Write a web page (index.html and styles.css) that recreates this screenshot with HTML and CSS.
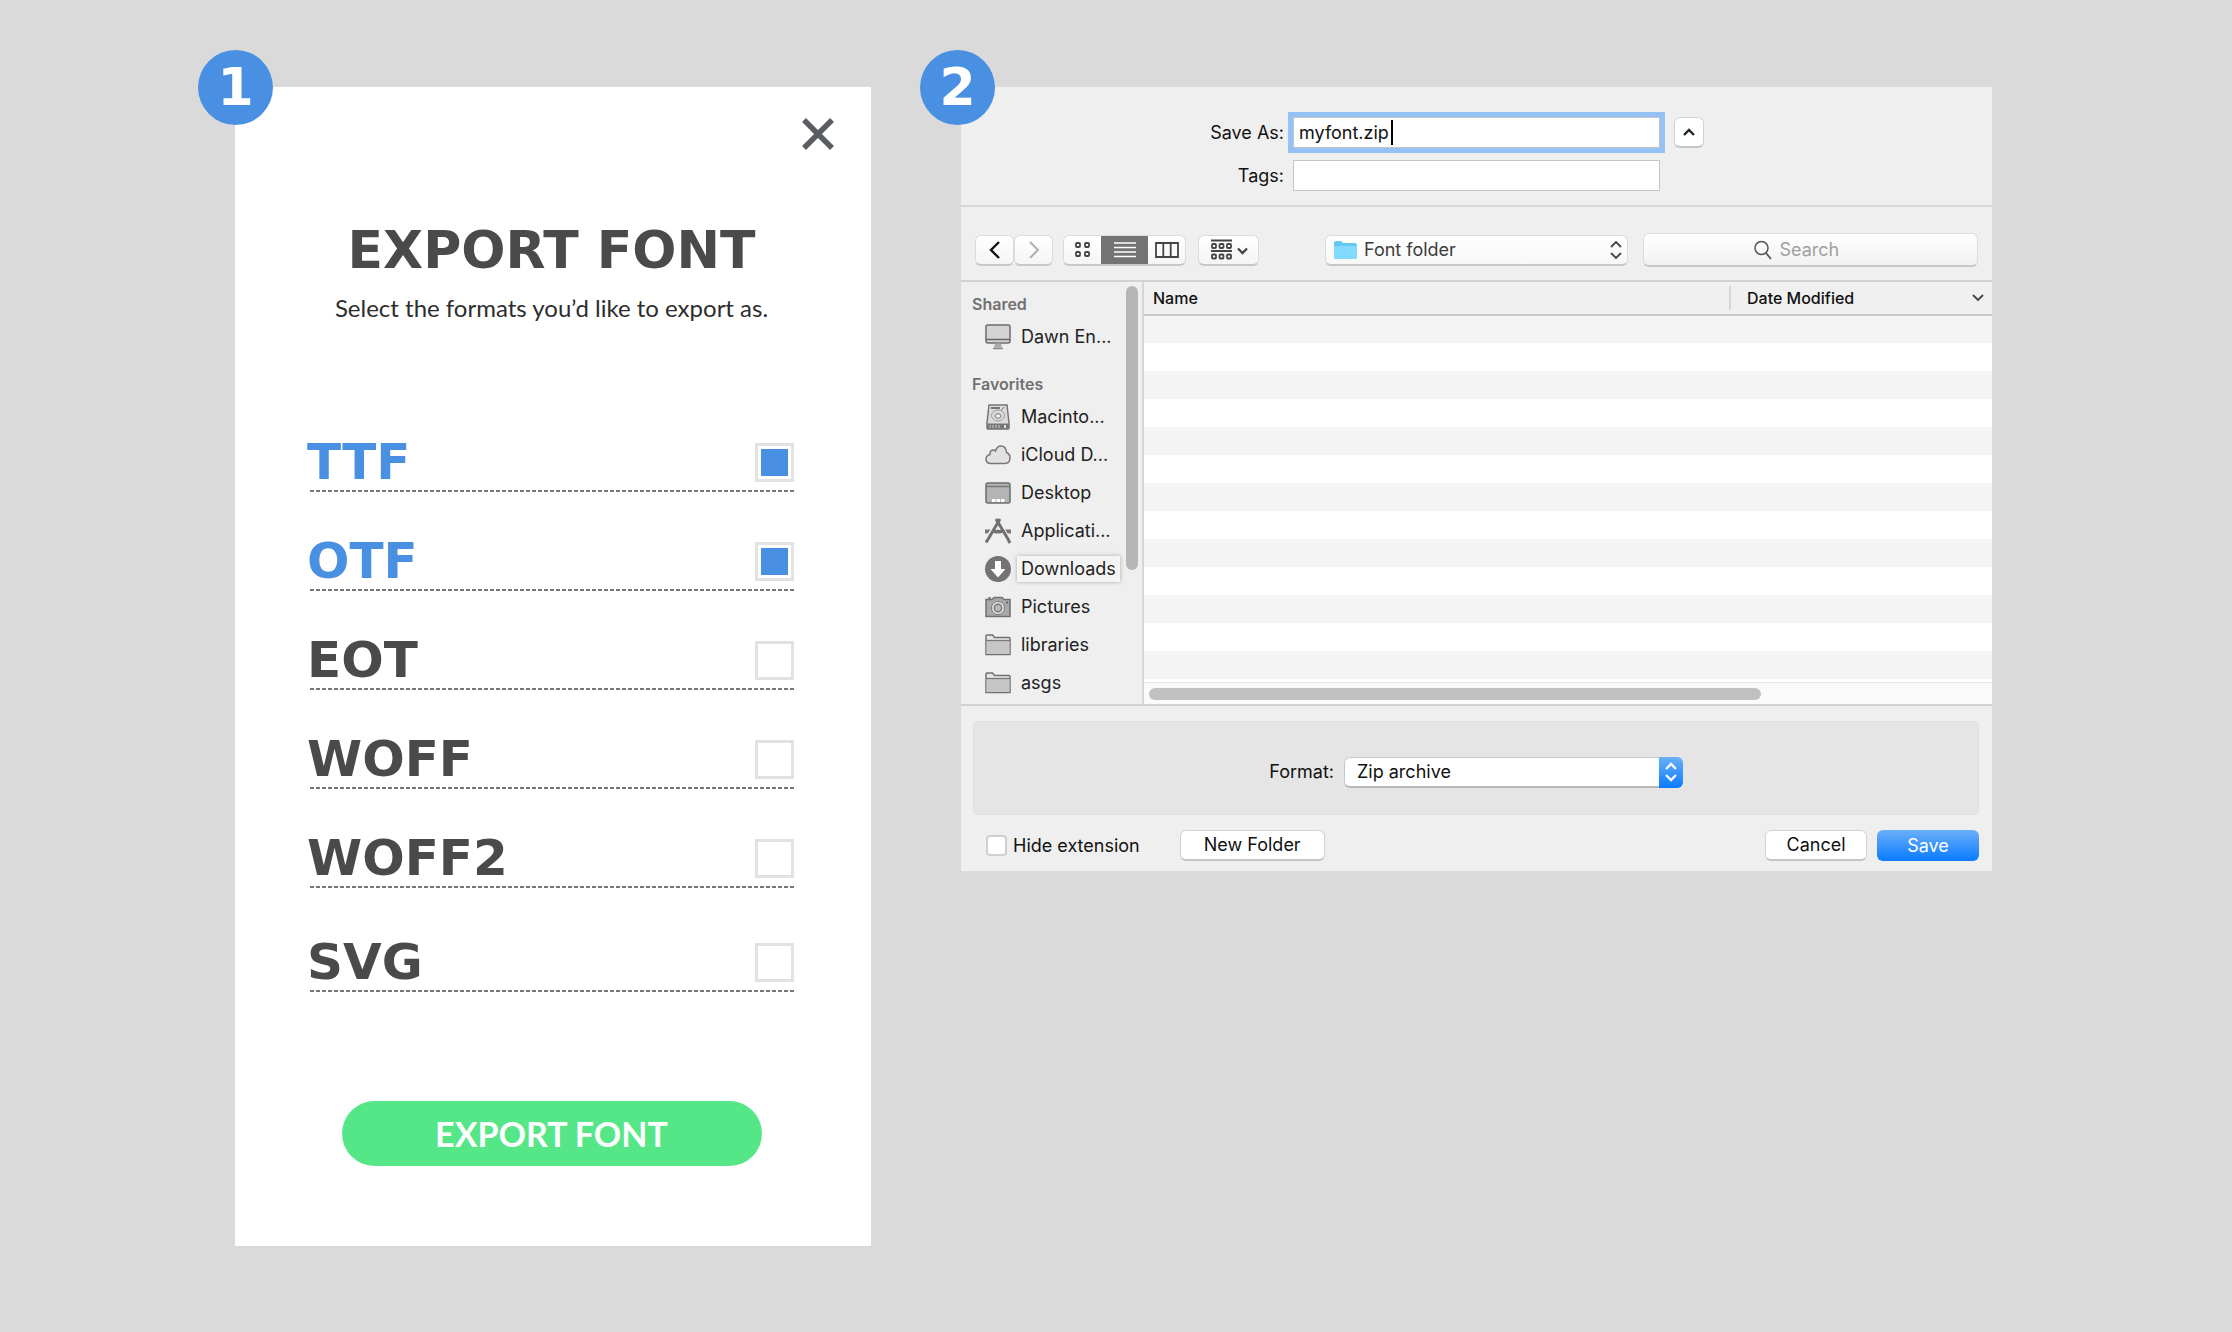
FILE: index.html
```html
<!DOCTYPE html>
<html lang="en">
<head>
<meta charset="utf-8">
<title>Export font</title>
<link rel="stylesheet" href="styles.css">
</head>
<body>
<main class="steps">
  <section class="export">
    <span class="badge">1</span>
    <button class="close" type="button" aria-label="Close">
      <svg width="32" height="32" viewBox="0 0 32 32"><path d="M2 2 30 30M30 2 2 30" stroke="#5a5d62" stroke-width="5.500"/></svg>
    </button>
    <h1 class="export-title">EXPORT FONT</h1>
    <p class="export-hint">Select the formats you’d like to export as.</p>
    <form class="formats">
      <label class="format"><span>TTF</span><input type="checkbox" checked></label>
      <label class="format"><span>OTF</span><input type="checkbox" checked></label>
      <label class="format"><span>EOT</span><input type="checkbox"></label>
      <label class="format"><span>WOFF</span><input type="checkbox"></label>
      <label class="format"><span>WOFF2</span><input type="checkbox"></label>
      <label class="format format-last"><span>SVG</span><input type="checkbox"></label>
      <button class="export-button" type="button">EXPORT FONT</button>
    </form>
  </section>

  <section class="dialog">
    <span class="badge">2</span>
    <div class="names">
      <label for="save-as">Save As:</label>
      <div class="field"><input class="text focused" id="save-as" type="text" value="myfont.zip"><span class="caret"></span></div>
      <button class="btn collapse" type="button" aria-label="Collapse">
        <svg width="14" height="10" viewBox="0 0 14 10"><path d="M2 8 7 3l5 5" class="line thick"/></svg>
      </button>
      <label for="tags">Tags:</label>
      <input class="text" id="tags" type="text">
    </div>

    <div class="toolbar">
      <div class="nav">
        <button class="btn" type="button" aria-label="Back"><svg width="12" height="20" viewBox="0 0 12 20"><path d="M10 2 2 10l8 8" fill="none" stroke="#111" stroke-width="2.4"/></svg></button>
        <button class="btn" type="button" aria-label="Forward"><svg width="12" height="20" viewBox="0 0 12 20"><path d="m2 2 8 8-8 8" fill="none" stroke="#b0b0b0" stroke-width="2"/></svg></button>
      </div>
      <div class="views">
        <button type="button" aria-label="Icons"><svg width="18" height="18" viewBox="0 0 18 18"><g class="line"><rect x="2" y="2" width="4" height="4" rx="1"/><rect x="11" y="2" width="4" height="4" rx="1"/><rect x="2" y="11" width="4" height="4" rx="1"/><rect x="11" y="11" width="4" height="4" rx="1"/></g></svg></button>
        <button class="active" type="button" aria-label="List"><svg width="22" height="18" viewBox="0 0 22 18"><path d="M0 2h22M0 6.500h22M0 11h22M0 15.500h22" stroke="#fff" stroke-width="1.600"/></svg></button>
        <button type="button" aria-label="Columns"><svg width="26" height="18" viewBox="0 0 26 18"><path d="M2 2h22v14H2zM9.300 2v14M16.700 2v14" class="line"/></svg></button>
      </div>
      <button class="btn arrange" type="button" aria-label="Arrange">
        <svg width="38" height="22" viewBox="0 0 38 22"><g class="line"><path d="M1 1.500h21M1 12h21"/><rect x="2" y="5" width="4" height="4" rx="1"/><rect x="9.500" y="5" width="4" height="4" rx="1"/><rect x="17" y="5" width="4" height="4" rx="1"/><rect x="2" y="15.500" width="4" height="4" rx="1"/><rect x="9.500" y="15.500" width="4" height="4" rx="1"/><rect x="17" y="15.500" width="4" height="4" rx="1"/><path d="m28 9.500 4.500 4.500L37 9.500" stroke-width="2.300"/></g></svg>
      </button>
      <div class="folder">
        <svg class="folder-icon" width="23" height="20" viewBox="0 0 23 20"><path d="M0 3Q0 1 2 1h5l2 2h12q2 0 2 2v12q0 2-2 2H2q-2 0-2-2z" fill="#64c8f0"/><path d="M0 6h23v11q0 2-2 2H2q-2 0-2-2z" fill="#82dbff"/></svg>
        <select aria-label="Folder"><option>Font folder</option></select>
        <svg class="folder-arrows" width="12" height="20" viewBox="0 0 12 20"><path d="m1 7 5-5 5 5M1 13l5 5 5-5" class="line"/></svg>
      </div>
      <label class="search">
        <svg width="18" height="20" viewBox="0 0 18 20"><circle cx="7.500" cy="8" r="6.500" fill="none" stroke="#555" stroke-width="1.500"/><path d="m12 13 5 6" stroke="#555" stroke-width="1.800"/></svg>
        <input type="search" placeholder="Search" aria-label="Search">
      </label>
    </div>

    <div class="browser">
      <nav class="sidebar">
        <h2>Shared</h2>
        <ul>
          <li><a href="#"><svg width="26" height="26" viewBox="0 0 26 26"><rect x="1" y="1" width="24" height="18" rx="2" fill="#d4d4d4" stroke="#6c6c6c" stroke-width="1.500"/><path d="M1 15.500h24" stroke="#666" stroke-width="1.500"/><path d="M10 19.500h6l1 4H9z" fill="#aaa"/><path d="M8 24.500h10" stroke="#888" stroke-width="1.500"/></svg><span>Dawn En...</span></a></li>
        </ul>
        <h2>Favorites</h2>
        <ul>
          <li><a href="#"><svg width="26" height="26" viewBox="0 0 26 26"><path d="M4 1h18l2 18v5q0 1-1 1H3q-1 0-1-1v-5z" fill="#dcdcdc" stroke="#747474" stroke-width="1.500"/><path d="M2 19.500h22V25H2z" fill="#777"/><path d="M5 21v3m3-3v3m3-3v3m3-3v3" stroke="#ccc"/><path d="M20 21v3" stroke="#ddd" stroke-width="2"/><path d="M6 4h9" stroke="#555" stroke-width="1.500"/><path d="m19 3-3 4" stroke="#777"/><ellipse cx="13" cy="11.500" rx="6.500" ry="5.500" fill="none" stroke="#999"/><ellipse cx="13" cy="12" rx="3" ry="2.300" fill="#eee" stroke="#777"/></svg><span>Macinto...</span></a></li>
          <li><a href="#"><svg width="26" height="26" viewBox="0 0 26 26"><path d="M6 21.500C2.500 21.500 1 19.500 1 17q0-3.500 4-4.500-.5-4 3-4.500 1.500 0 2.500 1 1.500-5 5.500-5 5 0 5.500 6.500 3.500 1.500 3.500 5 0 6-5.500 6z" fill="#e2e2e2" stroke="#777" stroke-width="1.500"/></svg><span>iCloud D...</span></a></li>
          <li><a href="#"><svg width="26" height="26" viewBox="0 0 26 26"><rect x="1" y="3" width="24" height="20" rx="2" fill="#b4b4b4" stroke="#6c6c6c" stroke-width="1.500"/><path d="M1 6.500h24" stroke="#777" stroke-width="1.500"/><path d="M7 19h3.500v3H7zm4.500 0h3.500v3h-3.500zM16 19h3.500v3H16z" fill="#fff"/></svg><span>Desktop</span></a></li>
          <li><a href="#"><svg width="26" height="26" viewBox="0 0 26 26"><path d="M0 13.500h26" stroke="#777" stroke-width="4"/><path d="M14.500 2 3 21" stroke="#efefef" stroke-width="6"/><path d="m11 2 11.500 19" stroke="#efefef" stroke-width="6"/><path d="M15 1 3.500 20.500 1 24.500M11 1l12 20M23 21l2 4" stroke="#707070" stroke-width="3"/><path d="M7 13.500h11" stroke="#707070" stroke-width="3"/></svg><span>Applicati...</span></a></li>
          <li><a href="#" class="selected"><svg width="26" height="26" viewBox="0 0 26 26"><circle cx="13" cy="13" r="13" fill="#737373"/><path d="M10 5h6v8h4.500L13 21.500 5.500 13H10z" fill="#fff"/></svg><span>Downloads</span></a></li>
          <li><a href="#"><svg width="26" height="26" viewBox="0 0 26 26"><path d="M1 5.500h5l1 0 2-2h8l2 2h6v17H1z" fill="#a9a9a9" stroke="#707070" stroke-width="1.500"/><path d="M3 4h3" stroke="#707070" stroke-width="1.500"/><circle cx="13" cy="14" r="6.500" fill="#e8e8e8" stroke="#777"/><circle cx="13" cy="14" r="3.700" fill="#bbb" stroke="#777" stroke-width="1.500"/><circle cx="22" cy="8.500" r="1" fill="#555"/></svg><span>Pictures</span></a></li>
          <li><a href="#"><svg width="26" height="26" viewBox="0 0 26 26"><path d="M1 22.500V4q0-1 1-1h5.500l2 2.500H24q1 0 1 1v16z" fill="#e6e6e6" stroke="#707070" stroke-width="1.500"/><path d="M1.500 8.500h23V22h-23z" fill="#c6c6c6"/><path d="M1 8.500h24" stroke="#777" stroke-width="1.300"/></svg><span>libraries</span></a></li>
          <li><a href="#"><svg width="26" height="26" viewBox="0 0 26 26"><path d="M1 22.500V4q0-1 1-1h5.500l2 2.500H24q1 0 1 1v16z" fill="#e6e6e6" stroke="#707070" stroke-width="1.500"/><path d="M1.500 8.500h23V22h-23z" fill="#c6c6c6"/><path d="M1 8.500h24" stroke="#777" stroke-width="1.300"/></svg><span>asgs</span></a></li>
        </ul>
        <span class="scroll-y"></span>
      </nav>
      <div class="files">
        <table>
          <thead><tr><th class="name">Name</th><th class="date"><div>Date Modified<svg width="12" height="8" viewBox="0 0 12 8"><path d="m1 1 5 5 5-5" class="line"/></svg></div></th></tr></thead>
          <tbody>
            <tr><td></td><td></td></tr><tr><td></td><td></td></tr><tr><td></td><td></td></tr><tr><td></td><td></td></tr><tr><td></td><td></td></tr><tr><td></td><td></td></tr><tr><td></td><td></td></tr><tr><td></td><td></td></tr><tr><td></td><td></td></tr><tr><td></td><td></td></tr><tr><td></td><td></td></tr><tr><td></td><td></td></tr><tr><td></td><td></td></tr>
          </tbody>
        </table>
        <div class="scroll-x"><span></span></div>
      </div>
    </div>

    <div class="options">
      <label for="format">Format:</label>
      <div class="picker">
        <select id="format"><option>Zip archive</option></select>
        <span class="picker-arrows"><svg width="12" height="20" viewBox="0 0 12 20"><path d="m1 7 5-5 5 5M1 13l5 5 5-5" fill="none" stroke="#fff" stroke-width="2.300"/></svg></span>
      </div>
    </div>

    <div class="actions">
      <label class="hide-ext"><input type="checkbox">Hide extension</label>
      <button class="btn new-folder" type="button">New Folder</button>
      <button class="btn cancel" type="button">Cancel</button>
      <button class="btn save" type="button">Save</button>
    </div>
  </section>
</main>
</body>
</html>
```

FILE: styles.css
```css
* { box-sizing: border-box; }

body {
  margin: 0;
  background: #dadada;
  color: #111;
  font: 18px/24px Inter, "Liberation Sans", sans-serif;
}

button, input, select { font: inherit; color: inherit; margin: 0; padding: 0; border: 0; }
button { display: flex; align-items: center; justify-content: center; background: none; }
svg { display: block; flex: none; }
.line { fill: none; stroke: #444; stroke-width: 1.8; }
.thick { stroke: #222; stroke-width: 2.4; }

.steps {
  display: grid;
  grid-template-columns: 636fr 1031fr;
  gap: 90px;
  align-items: start;
  padding: 87px 240px 87px 235px;
}

.badge {
  position: absolute;
  left: -37px;
  top: -37px;
  width: 75px;
  height: 75px;
  border-radius: 50%;
  background: #4a90e2;
  color: #fff;
  font: bold 52px/75px "DejaVu Sans", sans-serif;
  text-align: center;
}
.dialog .badge { left: -41px; }

/* Step 1: format list */
.export {
  position: relative;
  display: flex;
  flex-direction: column;
  padding: 31px 75px 80px 72px;
  background: #fff;
}

.close { align-self: flex-end; width: 32px; height: 32px; margin-right: -38px; }

.export-title {
  margin: 68px 0 0;
  color: #4a4a4a;
  font: bold 52px/64px "DejaVu Sans", sans-serif;
  text-align: center;
}

.export-hint {
  margin: 10px 0 69px;
  color: #2d2d2d;
  font: 24px/32px Lato, sans-serif;
  text-align: center;
}

.formats { display: flex; flex-direction: column; }

.format {
  display: flex;
  align-items: center;
  justify-content: space-between;
  height: 99px;
  padding: 50px 2px 10px 0;
  color: #4a4a4a;
  font: bold 50px/39px "DejaVu Sans", sans-serif;
  background: repeating-linear-gradient(90deg, #777 0 4px, #fff 4px 6px) 3px 100% / 100% 2px no-repeat;
}
.format-last { height: 104px; padding-top: 55px; }
.format:has(:checked) { color: #4a90e2; }

.format input {
  appearance: none;
  width: 39px;
  height: 39px;
  border: 3px solid #e2e2e2;
  background: #fff;
}
.format input:checked { background: #4a90e2; box-shadow: inset 0 0 0 3px #fff; }

.export-button {
  align-self: center;
  width: 420px;
  height: 65px;
  margin-top: 109px;
  border-radius: 33px;
  background: #55e787;
  color: #fff;
  font: bold 34px/40px Lato, sans-serif;
}

/* Step 2: save dialog */
.dialog {
  position: relative;
  background: #efefef;
}

.names {
  display: grid;
  grid-template-columns: 323px 367px 30px;
  column-gap: 9px;
  row-gap: 12px;
  align-items: center;
  padding: 30px 0 14px;
  border-bottom: 2px solid #d6d6d6;
}
.names label { text-align: right; }
.field { position: relative; display: flex; }
.text {
  width: 100%;
  height: 31px;
  padding: 0 5px;
  border: 1px solid #c4c4c4;
  background: #fff;
}
.focused { box-shadow: 0 0 0 5px #94c2f7; }
.text:focus { outline: 0; }
.caret { position: absolute; left: 98px; top: 3px; width: 2px; height: 25px; background: #000; }

.btn {
  height: 31px;
  border: 1px solid #d2d2d2;
  border-bottom: 2px solid #c4c4c4;
  border-radius: 6px;
  background: #fff;
}
.collapse { margin-left: 5px; width: 30px; }

.toolbar {
  display: flex;
  align-items: center;
  height: 75px;
  padding: 20px 14px 7px 14px;
  border-bottom: 2px solid #d2d2d2;
}
.toolbar .btn { border-color: #dcdcdc; border-bottom-color: #c8c8c8; background: linear-gradient(#fff, #f5f5f5); }
.nav { display: flex; }
.nav .btn { width: 39px; }
.views {
  display: flex;
  margin-left: 10px;
  border: 1px solid #dcdcdc;
  border-bottom: 2px solid #c8c8c8;
  border-radius: 6px;
  background: linear-gradient(#fff, #f5f5f5);
}
.views button { width: 37px; height: 28px; }
.views .active { width: 47px; background: #737373; }
.arrange { width: 61px; margin-left: 12px; }
.folder { position: relative; width: 303px; margin-left: 66px; }
.folder select {
  appearance: none;
  display: block;
  width: 100%;
  height: 31px;
  padding-left: 38px;
  border: 1px solid #dcdcdc;
  border-bottom: 2px solid #c8c8c8;
  border-radius: 6px;
  background: linear-gradient(#fff, #f7f7f7);
  color: #3c3c3c;
}
.folder-icon { position: absolute; left: 9px; top: 5px; }
.folder-arrows { position: absolute; right: 6px; top: 5px; }
.search {
  display: flex;
  flex: 1;
  align-items: center;
  justify-content: center;
  gap: 8px;
  height: 34px;
  margin-left: 15px;
  border: 1px solid #dcdcdc;
  border-bottom: 2px solid #c8c8c8;
  border-radius: 6px;
  background: linear-gradient(#fff, #f2f2f2);
}
.search input { width: 88px; background: none; }
.search input::placeholder { color: #a0a0a0; opacity: 1; }

.browser { display: grid; grid-template-columns: 183px 1fr; border-bottom: 2px solid #d2d2d2; }

.sidebar {
  position: relative;
  border-right: 2px solid #d6d6d6;
  padding: 10px 18px 2px 11px;
}
.sidebar h2 { margin: 0; color: #717171; font-size: 16px; font-weight: 600; line-height: 24px; }
.sidebar ul { margin: 0 0 16px; padding: 2px 0 0 13px; list-style: none; }
.sidebar ul:last-of-type { margin: 0; }
.sidebar a {
  display: flex;
  align-items: center;
  gap: 6px;
  height: 38px;
  color: #222;
  text-decoration: none;
  white-space: nowrap;
}
.sidebar a span { padding: 1px 4px; }
.sidebar .selected span { background: #f4f4f4; box-shadow: 0 0 4px #aaa; }
.scroll-y { position: absolute; right: 4px; top: 4px; width: 12px; height: 284px; border-radius: 6px; background: #b6b6b6; }

.files { display: flex; flex-direction: column; background: #fff; }
.files table { width: 100%; border-collapse: collapse; }
.files th {
  height: 33px;
  padding: 0 0 0 9px;
  border-bottom: 2px solid #c8c8c8;
  background: #f0f0f0;
  font-size: 16px;
  font-weight: 500;
  line-height: 24px;
  text-align: left;
}
.files .date { width: 263px; padding: 0; }
.date div {
  display: flex;
  align-items: center;
  justify-content: space-between;
  padding: 0 8px 0 16px;
  border-left: 2px solid #d6d6d6;
}
.files td { height: 28px; padding: 0; }
.files tbody tr:nth-child(odd) { background: #f4f4f4; }
.scroll-x { height: 22px; margin-top: auto; padding: 5px; border-top: 1px solid #e4e4e4; background: #fafafa; }
.scroll-x span { display: block; width: 73%; height: 12px; border-radius: 6px; background: #c1c1c1; }

.options {
  display: grid;
  grid-template-columns: 360px 339px;
  column-gap: 10px;
  align-items: center;
  height: 94px;
  margin: 15px 13px 15px 12px;
  padding-top: 8px;
  border: 1px solid #dedede;
  border-radius: 6px;
  background: #e5e5e5;
}
.options label { text-align: right; }
.picker { position: relative; }
.picker select {
  appearance: none;
  display: block;
  width: 100%;
  height: 31px;
  padding-left: 12px;
  border: 1px solid #c8c8c8;
  border-bottom: 2px solid #b8b8b8;
  border-radius: 6px;
  background: #fff;
}
.picker-arrows {
  position: absolute;
  right: 0;
  top: 0;
  display: flex;
  align-items: center;
  justify-content: center;
  width: 24px;
  height: 31px;
  border-radius: 0 6px 6px 0;
  background: linear-gradient(#6bb0f9, #0a7aff);
}

.actions { display: flex; align-items: center; gap: 10px; padding: 0 13px 10px 25px; }
.hide-ext { display: flex; align-items: center; gap: 6px; }
.hide-ext input {
  appearance: none;
  width: 21px;
  height: 21px;
  border: 2px solid #cfcfcf;
  border-radius: 4px;
  background: #fff;
}
.new-folder { width: 145px; margin-left: 30px; }
.cancel { width: 102px; margin-left: auto; }
.save { width: 102px; border: 0; background: linear-gradient(#6bb0f9, #0a7aff); color: #fff; }
```
